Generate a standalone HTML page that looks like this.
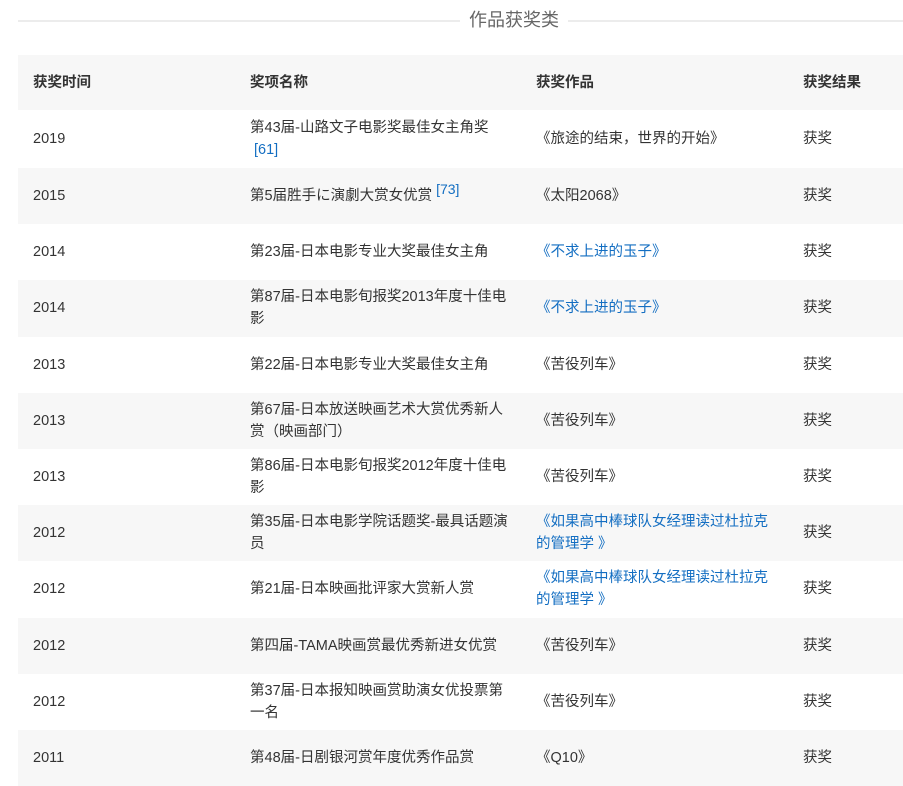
<!DOCTYPE html>
<html><head><meta charset="utf-8"><style>
body{margin:0;background:#fff;font-family:"Liberation Sans","Noto Sans CJK SC",sans-serif;color:#333;font-size:14.5px;width:903px;height:782px;overflow:hidden}
.title{position:absolute;top:8px;left:18px;right:0;height:24px}
.title .l{position:absolute;top:12px;left:0;right:0;height:2px;background:#ececec}
.title span{position:absolute;left:442px;top:0;background:#fff;padding:0 9px;font-size:18px;color:#666;line-height:24px}
table{position:absolute;top:55px;left:18px;width:885px;border-collapse:collapse;table-layout:fixed}
td{padding:0 0 0 15px;vertical-align:middle;line-height:22px}
tr{height:56.2px}
tr:nth-child(odd){background:#f7f7f7}
tr.h{height:55px}
tr.h td{font-weight:bold}
tr:nth-child(2){height:58px}
.c1{width:202px}.c2{width:271px}.c3{width:252px}
td div.w2{width:268px}
td div.w3{width:242px}
a{color:#136ec2;text-decoration:none}
sup{color:#136ec2;font-size:14px;vertical-align:6px;line-height:0}
</style></head><body>
<div class="title"><div class="l"></div><span>作品获奖类</span></div>
<table>
<tr class="h"><td class="c1">获奖时间</td><td class="c2">奖项名称</td><td class="c3">获奖作品</td><td>获奖结果</td></tr>
<tr><td>2019</td><td><div class="w2">第43届-山路文子电影奖最佳女主角奖<br><a>&nbsp;[61]</a></div></td><td>《旅途的结束，世界的开始》</td><td>获奖</td></tr>
<tr><td>2015</td><td><div class="w2">第5届胜手に演劇大赏女优赏 <sup>[73]</sup></div></td><td>《太阳2068》</td><td>获奖</td></tr>
<tr><td>2014</td><td><div class="w2">第23届-日本电影专业大奖最佳女主角</div></td><td><a>《不求上进的玉子》</a></td><td>获奖</td></tr>
<tr><td>2014</td><td><div class="w2">第87届-日本电影旬报奖2013年度十佳电<br>影</div></td><td><a>《不求上进的玉子》</a></td><td>获奖</td></tr>
<tr><td>2013</td><td><div class="w2">第22届-日本电影专业大奖最佳女主角</div></td><td>《苦役列车》</td><td>获奖</td></tr>
<tr><td>2013</td><td><div class="w2">第67届-日本放送映画艺术大赏优秀新人<br>赏（映画部门）</div></td><td>《苦役列车》</td><td>获奖</td></tr>
<tr><td>2013</td><td><div class="w2">第86届-日本电影旬报奖2012年度十佳电<br>影</div></td><td>《苦役列车》</td><td>获奖</td></tr>
<tr><td>2012</td><td><div class="w2">第35届-日本电影学院话题奖-最具话题演<br>员</div></td><td><div class="w3"><a>《如果高中棒球队女经理读过杜拉克<br>的管理学 》</a></div></td><td>获奖</td></tr>
<tr><td>2012</td><td><div class="w2">第21届-日本映画批评家大赏新人赏</div></td><td><div class="w3"><a>《如果高中棒球队女经理读过杜拉克<br>的管理学 》</a></div></td><td>获奖</td></tr>
<tr><td>2012</td><td><div class="w2">第四届-TAMA映画赏最优秀新进女优赏</div></td><td>《苦役列车》</td><td>获奖</td></tr>
<tr><td>2012</td><td><div class="w2">第37届-日本报知映画赏助演女优投票第<br>一名</div></td><td>《苦役列车》</td><td>获奖</td></tr>
<tr><td>2011</td><td><div class="w2">第48届-日剧银河赏年度优秀作品赏</div></td><td>《Q10》</td><td>获奖</td></tr>
</table>
</body></html>
